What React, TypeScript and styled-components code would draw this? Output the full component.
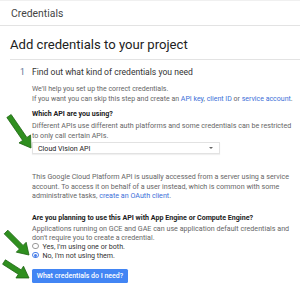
import React from "react";
import styled, { createGlobalStyle } from "styled-components";

const Global = createGlobalStyle`
  html, body { margin: 0; padding: 0; background: #fff; }
  body { width: 300px; height: 298px; overflow: hidden; font-family: Roboto, "Liberation Sans", Arial, sans-serif; }
  * { box-sizing: border-box; }
`;

const Page = styled.div`
  position: relative;
  width: 300px;
  height: 298px;
  overflow: hidden;
  background: #fff;
`;

const Header = styled.div`
  height: 26px;
  display: flex;
  align-items: center;
  padding-left: 11px;
  border-top: 1px solid #f0f0f0;
  border-bottom: 1px solid #e3e3e3;
  font-size: 10.4px;
  color: #444;
`;

const TitleBlock = styled.div`
  margin-left: 10px;
  margin-top: 11px;
  padding-bottom: 6px;
  border-bottom: 1px solid #e3e3e3;
`;

const Title = styled.h1`
  margin: 0;
  font-size: 13.1px;
  line-height: 16px;
  font-weight: 400;
  color: #212121;
`;

const Step = styled.div`
  display: flex;
  margin-top: 7px;
  font-size: 8.6px;
  line-height: 10px;
  color: #333;
`;

const StepNum = styled.span`
  flex: none;
  box-sizing: content-box;
  width: 12px;
  padding-left: 20px;
  color: #5a6f96;
`;

const Body = styled.div`
  margin-left: 32px;
  width: 266px;
`;

const Para = styled.div<{ $mt?: number; $lh?: number; $fs?: number }>`
  margin-top: ${(p) => p.$mt ?? 0}px;
  font-size: ${(p) => p.$fs ?? 7.15}px;
  line-height: ${(p) => p.$lh ?? 9.5}px;
  color: #666;
`;

const Line = styled.div`
  white-space: nowrap;
`;

const Label = styled.div<{ $mt?: number }>`
  margin-top: ${(p) => p.$mt ?? 0}px;
  font-size: 7.1px;
  line-height: 10px;
  font-weight: 700;
  color: #222;
`;

const Link = styled.a`
  color: #3b6fd8;
  text-decoration: none;
`;

const Select = styled.div`
  margin-top: 2px;
  width: 188px;
  height: 12px;
  display: flex;
  align-items: center;
  justify-content: space-between;
  padding: 0 6px 0 5px;
  border: 1px solid #e2e2e2;
  box-shadow: 0 1px 1px rgba(0, 0, 0, 0.06);
  font-size: 7.1px;
  color: #222;
`;

const Caret = styled.span`
  width: 0;
  height: 0;
  border-left: 2.5px solid transparent;
  border-right: 2.5px solid transparent;
  border-top: 2.5px solid #666;
`;

const Radios = styled.div`
  display: flex;
  flex-direction: column;
`;

const RadioRow = styled.label`
  display: flex;
  align-items: center;
  height: 9px;
  font-size: 7.1px;
  color: #333;
  gap: 4px;
`;

const RadioDot = styled.span<{ $on?: boolean }>`
  width: 6.5px;
  height: 6.5px;
  border-radius: 50%;
  border: 1px solid ${(p) => (p.$on ? "#4a7fe8" : "#9a9a9a")};
  display: flex;
  align-items: center;
  justify-content: center;
  background: #fff;
  &::after {
    content: "";
    width: 3px;
    height: 3px;
    border-radius: 50%;
    background: ${(p) => (p.$on ? "#4a7fe8" : "transparent")};
  }
`;

const Button = styled.button`
  margin-top: 9.5px;
  height: 14px;
  width: 96px;
  padding: 0;
  border: none;
  border-radius: 1.5px;
  background: #4285f4;
  color: #fff;
  font-family: inherit;
  font-size: 7px;
  font-weight: 500;
  display: flex;
  align-items: center;
  justify-content: center;
`;

const Overlay = styled.svg`
  position: absolute;
  inset: 0;
  pointer-events: none;
`;

function arrowPoints(tx: number, ty: number, px: number, py: number) {
  const dx = px - tx;
  const dy = py - ty;
  const len = Math.hypot(dx, dy);
  const ux = dx / len;
  const uy = dy / len;
  const nx = -uy;
  const ny = ux;
  const w = 2.6;
  const h = 7;
  const L = 11;
  const bx = px - ux * L;
  const by = py - uy * L;
  const pts: [number, number][] = [
    [tx + nx * w, ty + ny * w],
    [bx + nx * w, by + ny * w],
    [bx + nx * h, by + ny * h],
    [px, py],
    [bx - nx * h, by - ny * h],
    [bx - nx * w, by - ny * w],
    [tx - nx * w, ty - ny * w],
  ];
  return pts.map((p) => p.join(",")).join(" ");
}

const arrows = [
  [9, 116, 31, 148],
  [6, 232, 29, 255],
  [4, 262, 29, 278],
];

export default function App() {
  return (
    <Page>
      <Global />
      <Header>Credentials</Header>
      <TitleBlock>
        <Title>Add credentials to your project</Title>
      </TitleBlock>
      <Step>
        <StepNum>1</StepNum>
        <span>Find out what kind of credentials you need</span>
      </Step>
      <Body>
        <Para $mt={7} $lh={10} $fs={7}>
          <Line>We'll help you set up the correct credentials.</Line>
          <Line>
            If you want you can skip this step and create an <Link>API key</Link>, <Link>client ID</Link> or{" "}
            <Link>service account</Link>.
          </Line>
        </Para>
        <Label $mt={5}>Which API are you using?</Label>
        <Para $mt={2}>
          <Line>Different APIs use different auth platforms and some credentials can be restricted</Line>
          <Line>to only call certain APIs.</Line>
        </Para>
        <Select>
          <span>Cloud Vision API</span>
          <Caret />
        </Select>
        <Para $mt={18}>
          <Line>This Google Cloud Platform API is usually accessed from a server using a service</Line>
          <Line>account. To access it on behalf of a user instead, which is common with some</Line>
          <Line>
            administrative tasks, <Link>create an OAuth client</Link>.
          </Line>
        </Para>
        <Label $mt={12}>Are you planning to use this API with App Engine or Compute Engine?</Label>
        <Para $mt={1} $lh={9}>
          <Line>Applications running on GCE and GAE can use application default credentials and</Line>
          <Line>don't require you to create a credential.</Line>
        </Para>
        <Radios>
          <RadioRow>
            <RadioDot />
            Yes, I'm using one or both.
          </RadioRow>
          <RadioRow>
            <RadioDot $on />
            No, I'm not using them.
          </RadioRow>
        </Radios>
        <Button>What credentials do I need?</Button>
      </Body>
      <Overlay width="300" height="298" viewBox="0 0 300 298">
        {arrows.map((a, i) => (
          <polygon
            key={i}
            points={arrowPoints(a[0], a[1], a[2], a[3])}
            fill="#2f8f1f"
            stroke="#1d6512"
            strokeWidth="0.8"
            strokeLinejoin="round"
          />
        ))}
      </Overlay>
    </Page>
  );
}
